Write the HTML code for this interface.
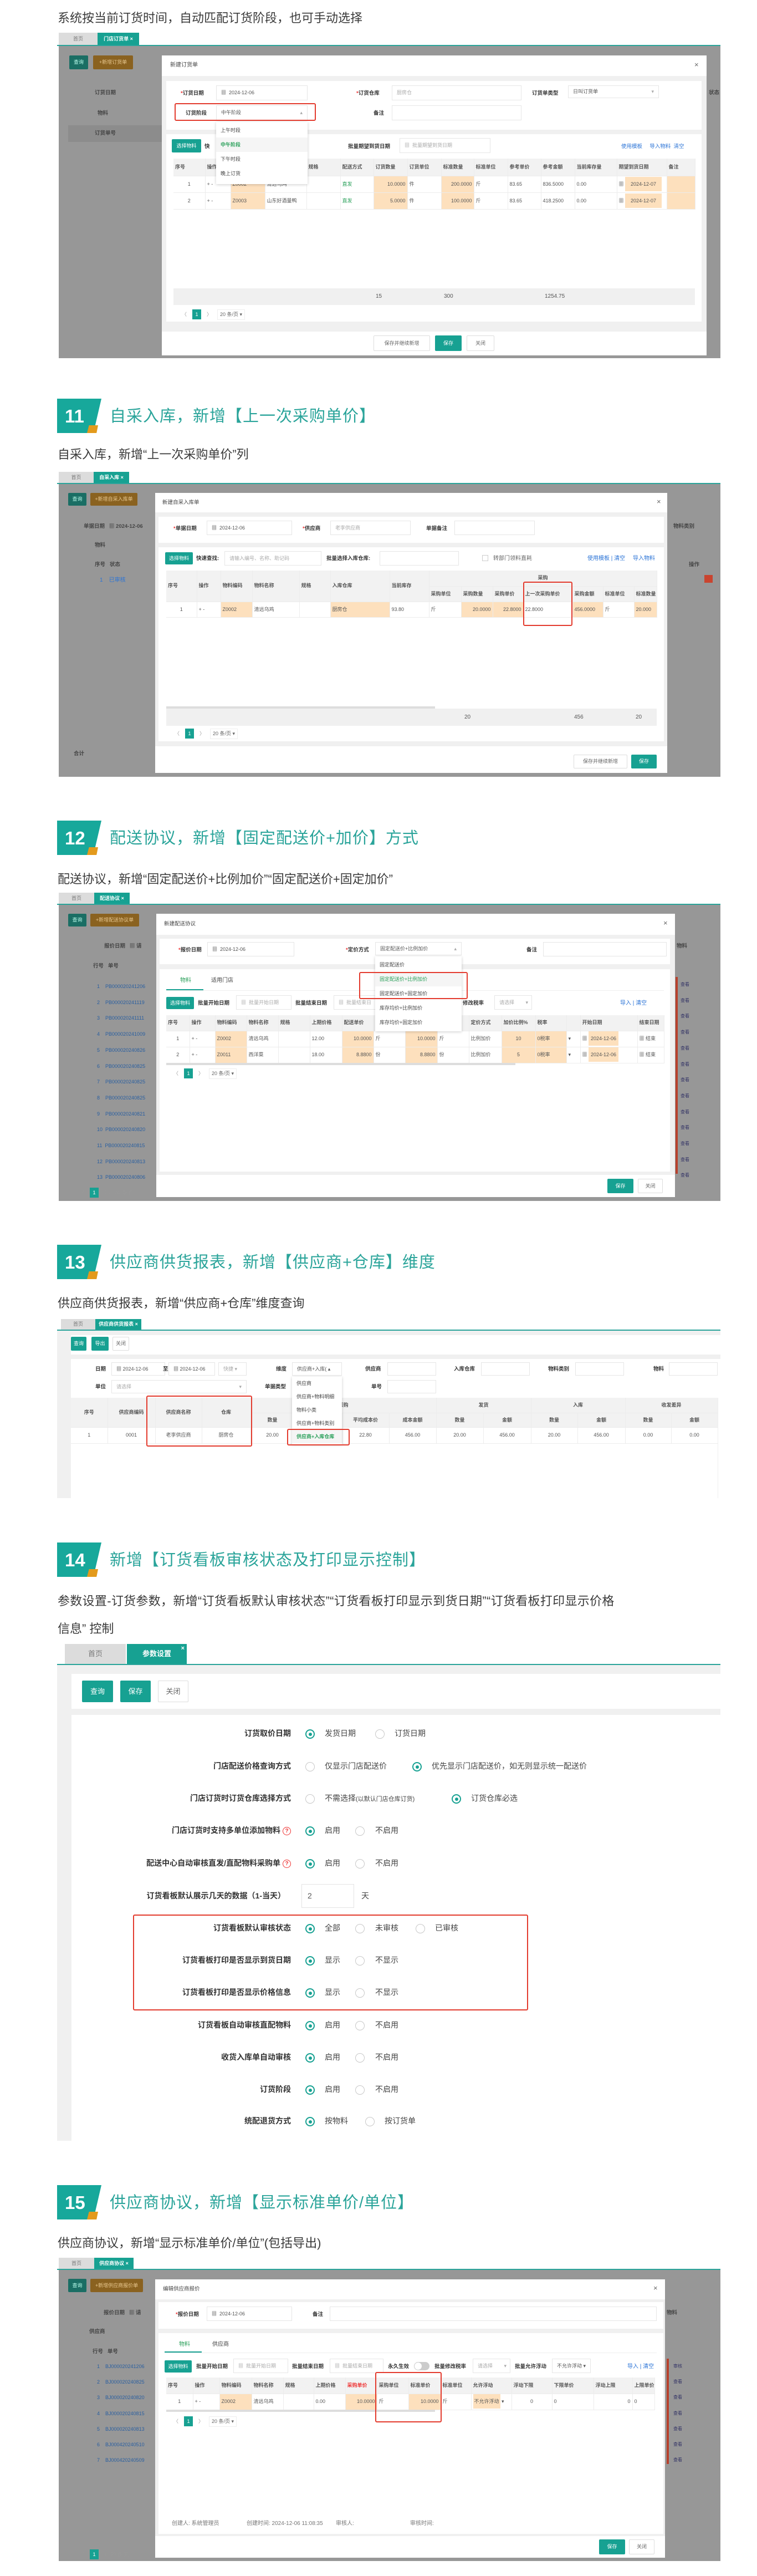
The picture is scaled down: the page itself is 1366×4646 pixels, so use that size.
<!DOCTYPE html>
<html><head><meta charset="utf-8">
<style>
*{margin:0;padding:0;box-sizing:border-box}
body{width:1366px;height:4646px;position:relative;background:#fff;font-family:"Liberation Sans","Noto Sans CJK SC",sans-serif;color:#333;overflow:hidden}
.a{position:absolute}
.txt{position:absolute;left:104px;font-size:22px;color:#3a3a3a;white-space:nowrap;line-height:30px}
.hd{position:absolute;left:103px;height:62px;width:900px}
.hd .bd{position:absolute;left:0;top:0;width:80px;height:62px;background:#17a89b;clip-path:polygon(0 0,100% 0,82% 100%,0 100%)}
.hd .or{position:absolute;left:54px;top:48px;width:20px;height:14px;background:#e39a1c;clip-path:polygon(18% 0,100% 0,86% 100%,0 100%)}
.hd .n{position:absolute;left:14px;top:12px;font-size:33px;font-weight:bold;color:#fff;line-height:40px}
.hd .tt{position:absolute;left:95px;top:12px;font-size:29px;color:#2aa49a;line-height:40px;white-space:nowrap;letter-spacing:1px}
.s{position:absolute;left:103px;width:1197px;overflow:hidden;font-size:10px;color:#555;line-height:1.2}
.s .a{white-space:nowrap}
.tabs{position:absolute;left:0;top:0;width:100%;border-bottom:2px solid #2aa49a;background:#fff}
.tab{position:absolute;top:0;bottom:0;display:flex;align-items:center;justify-content:center;font-size:9px}
.t0{background:#dcdcdc;color:#777}
.t1{background:#17a192;color:#fff;font-weight:bold}
.gray{background:#979797}
.w{background:#fff}
.lg{background:#f0f0f0}
.btn{position:absolute;display:flex;align-items:center;justify-content:center;font-size:9px;border-radius:2px}
.bt{background:#17a192;color:#fff}
.bo{background:#c98316;color:#f3dcb0}
.bw{background:#fff;border:1px solid #ddd;color:#666}
.inp{position:absolute;background:#fff;border:1px solid #e6e6e6;font-size:9px;color:#555;padding-left:8px;display:flex;align-items:center}
.ph{color:#aaa}
.lb{position:absolute;font-size:9.5px;color:#333;font-weight:bold}
.red{position:absolute;border:2px solid #e33b2e;border-radius:3px}
table.t{position:absolute;border-collapse:collapse;table-layout:fixed;font-size:9px;color:#555}
table.t td{border-right:1px solid #ececec;border-bottom:1px solid #ececec;padding:0 3px;white-space:nowrap;overflow:hidden}
table.t tr.h td{background:#f2f2f2;color:#555;font-weight:bold}
.o{background:#fde0bd !important}
.g{color:#2aa05a}
.bl{color:#2a73d6}
.dd{position:absolute;background:#fff;box-shadow:0 1px 5px rgba(0,0,0,.2);font-size:9px;color:#444}
.dd div{height:26px;display:flex;align-items:center;padding-left:8px}
.pg{position:absolute;display:flex;align-items:center;gap:10px;font-size:9px;color:#999}
.pg b{display:inline-block;width:16px;height:18px;background:#17a192;color:#fff;text-align:center;line-height:18px;font-weight:normal}
.pr{position:absolute;left:0;width:1197px;height:20px;font-size:14px}
.pr .l{position:absolute;right:775px;top:0;font-weight:bold;color:#333;white-space:nowrap}
.pr .op{position:absolute;top:0;white-space:nowrap;color:#444}
.rd{position:absolute;top:1px;width:17px;height:17px;border-radius:50%;border:1px solid #c8c8c8;background:#fff}
.rd.on{border:2px solid #17a192}
.rd.on:after{content:"";position:absolute;left:3.5px;top:3.5px;width:6px;height:6px;border-radius:50%;background:#17a192}
.q{display:inline-block;width:15px;height:15px;border:1px solid #e33;border-radius:50%;color:#e33;font-size:10px;line-height:13px;text-align:center;margin-left:4px;vertical-align:1px}
</style></head><body>

<div class="txt" style="top:18px">系统按当前订货时间，自动匹配订货阶段，也可手动选择</div>

<!-- Screenshot 1 -->
<div class="s" style="top:59px;height:587px">
  <div class="tabs" style="height:24px"><div class="tab t0" style="left:3px;width:70px">首页</div><div class="tab t1" style="left:73px;width:75px">门店订货单 ×</div></div>
  <div class="a gray" style="left:3px;top:24px;width:1194px;height:563px"></div>
  <div class="btn" style="left:22px;top:41px;width:34px;height:25px;background:#1a6e64;color:#bfe">查询</div>
  <div class="btn" style="left:65px;top:41px;width:72px;height:25px;background:#8a6220;color:#e8c890">+新增订货单</div>
  <div class="lb" style="left:68px;top:103px;color:#444">订货日期</div>
  <div class="lb" style="left:73px;top:140px;color:#444">物料</div>
  <div class="a" style="left:20px;top:167px;width:170px;height:30px;background:#8c8c8c"></div>
  <div class="lb" style="left:68px;top:176px;color:#444">订货单号</div>
  <div class="lb" style="left:1176px;top:103px;color:#444">状态</div>
  <!-- modal -->
  <div class="a lg" style="left:189px;top:41px;width:983px;height:541px"></div>
  <div class="a w" style="left:189px;top:41px;width:983px;height:37px"></div>
  <div class="a" style="left:204px;top:53px;font-size:10px;color:#444">新建订货单</div>
  <div class="a" style="left:1150px;top:50px;font-size:13px;color:#666">×</div>
  <div class="a w" style="left:197px;top:87px;width:966px;height:88px"></div>
  <div class="lb" style="left:223px;top:104px"><span style="color:#e33">*</span>订货日期</div>
  <div class="inp" style="left:287px;top:95px;width:165px;height:27px">▦ &nbsp;2024-12-06</div>
  <div class="lb" style="left:540px;top:104px"><span style="color:#e33">*</span>订货仓库</div>
  <div class="inp ph" style="left:604px;top:95px;width:234px;height:27px">厨房仓</div>
  <div class="lb" style="left:857px;top:104px">订货单类型</div>
  <div class="inp" style="left:922px;top:95px;width:164px;height:23px">日叫订货单<span style="margin-left:auto;margin-right:8px;color:#aaa">▾</span></div>
  <div class="lb" style="left:232px;top:140px">订货阶段</div>
  <div class="inp" style="left:287px;top:131px;width:165px;height:27px">中午阶段<span style="margin-left:auto;margin-right:8px;color:#aaa">▴</span></div>
  <div class="red" style="left:212px;top:127px;width:255px;height:32px"></div>
  <div class="lb" style="left:571px;top:140px">备注</div>
  <div class="inp" style="left:604px;top:131px;width:234px;height:27px"></div>
  <div class="a w" style="left:197px;top:183px;width:966px;height:338px"></div>
  <div class="btn bt" style="left:207px;top:192px;width:53px;height:24px">选择物料</div>
  <div class="lb" style="left:266px;top:200px">快</div>
  <div class="lb" style="left:525px;top:200px">批量期望到货日期</div>
  <div class="inp ph" style="left:618px;top:190px;width:164px;height:27px">▦ &nbsp;批量期望到货日期</div>
  <div class="a bl" style="left:1018px;top:200px;font-size:9.5px">使用模板 &nbsp; &nbsp; 导入物料 &nbsp;清空</div>
  <table class="t" style="left:210px;top:227px;width:941px">
   <colgroup><col style="width:57px"><col style="width:46px"><col style="width:62px"><col style="width:75px"><col style="width:61px"><col style="width:60px"><col style="width:61px"><col style="width:61px"><col style="width:59px"><col style="width:61px"><col style="width:60px"><col style="width:61px"><col style="width:76px"><col style="width:90px"><col style="width:51px"></colgroup>
   <tr class="h" style="height:31px"><td>序号</td><td>操作</td><td>物料编码</td><td>物料名称</td><td>规格</td><td>配送方式</td><td>订货数量</td><td>订货单位</td><td>标准数量</td><td>标准单位</td><td>参考单价</td><td>参考金额</td><td>当前库存量</td><td>期望到货日期</td><td>备注</td></tr>
   <tr style="height:30px"><td style="text-align:center">1</td><td>+ -</td><td class="o">Z0002</td><td>清远乌鸡</td><td></td><td class="g">直发</td><td class="o" style="text-align:right">10.0000</td><td>件</td><td class="o" style="text-align:right">200.0000</td><td>斤</td><td>83.65</td><td>836.5000</td><td>0.00</td><td>▦ <span class="o" style="padding:8px 10px">2024-12-07</span></td><td class="o"></td></tr>
   <tr style="height:30px"><td style="text-align:center">2</td><td>+ -</td><td class="o">Z0003</td><td>山东好酒量鸭</td><td></td><td class="g">直发</td><td class="o" style="text-align:right">5.0000</td><td>件</td><td class="o" style="text-align:right">100.0000</td><td>斤</td><td>83.65</td><td>418.2500</td><td>0.00</td><td>▦ <span class="o" style="padding:8px 10px">2024-12-07</span></td><td class="o"></td></tr>
  </table>
  <div class="a lg" style="left:210px;top:461px;width:941px;height:30px"></div>
  <div class="a" style="left:575px;top:470px">15</div>
  <div class="a" style="left:698px;top:470px">300</div>
  <div class="a" style="left:880px;top:470px">1254.75</div>
  <div class="pg" style="left:225px;top:499px">〈 <b>1</b> 〉 <span style="border:1px solid #eee;padding:3px 4px;color:#666">20 条/页 ▾</span></div>
  <div class="dd" style="left:287px;top:161px;width:165px;height:112px;padding-top:2px">
    <div>上午时段</div><div class="g" style="background:#f5f5f5;font-weight:bold">中午阶段</div><div>下午时段</div><div>晚上订货</div>
  </div>
  <div class="a w" style="left:189px;top:539px;width:983px;height:43px"></div>
  <div class="btn bw" style="left:571px;top:546px;width:102px;height:28px">保存并继续新增</div>
  <div class="btn bt" style="left:682px;top:546px;width:48px;height:28px">保存</div>
  <div class="btn bw" style="left:739px;top:546px;width:50px;height:28px">关闭</div>
</div>

<!-- Heading 11 -->
<div class="hd" style="top:719px"><div class="bd"></div><div class="or"></div><div class="n">11</div><div class="tt">自采入库，新增【上一次采购单价】</div></div>
<div class="txt" style="top:805px">自采入库，新增“上一次采购单价”列</div>

<!-- Screenshot 2 -->
<div class="s" style="top:851px;height:550px">
  <div class="tabs" style="height:22px"><div class="tab t0" style="left:3px;width:63px">首页</div><div class="tab t1" style="left:66px;width:64px">自采入库 ×</div></div>
  <div class="a gray" style="left:3px;top:22px;width:1194px;height:528px"></div>
  <div class="btn" style="left:20px;top:38px;width:33px;height:23px;background:#1a6e64;color:#bfe">查询</div>
  <div class="btn" style="left:60px;top:38px;width:85px;height:23px;background:#8a6220;color:#e8c890">+新增自采入库单</div>
  <div class="lb" style="left:48px;top:93px;color:#444">单据日期 &nbsp; ▦ 2024-12-06</div>
  <div class="lb" style="left:68px;top:127px;color:#444">物料</div>
  <div class="lb" style="left:68px;top:162px;color:#444">序号 &nbsp; 状态</div>
  <div class="a bl" style="left:77px;top:190px">1 &nbsp; &nbsp;已审核</div>
  <div class="lb" style="left:30px;top:503px;color:#444">合计</div>
  <div class="lb" style="left:1112px;top:93px;color:#444">物料类别</div>
  <div class="lb" style="left:1140px;top:162px;color:#444">操作</div>
  <div class="a" style="left:1168px;top:186px;width:15px;height:14px;background:#c9442f"></div>
  <div class="a lg" style="left:177px;top:38px;width:924px;height:505px"></div>
  <div class="a w" style="left:177px;top:38px;width:924px;height:35px"></div>
  <div class="a" style="left:190px;top:50px;font-size:9.5px;color:#444">新建自采入库单</div>
  <div class="a" style="left:1082px;top:46px;font-size:13px;color:#666">×</div>
  <div class="a w" style="left:183px;top:81px;width:912px;height:47px"></div>
  <div class="lb" style="left:210px;top:97px"><span style="color:#e33">*</span>单据日期</div>
  <div class="inp" style="left:270px;top:88px;width:154px;height:26px">▦ &nbsp;2024-12-06</div>
  <div class="lb" style="left:443px;top:97px"><span style="color:#e33">*</span>供应商</div>
  <div class="inp ph" style="left:493px;top:88px;width:145px;height:26px">老李供应商</div>
  <div class="lb" style="left:666px;top:97px">单据备注</div>
  <div class="inp" style="left:717px;top:88px;width:145px;height:26px"></div>
  <div class="a w" style="left:183px;top:136px;width:912px;height:350px"></div>
  <div class="btn bt" style="left:195px;top:145px;width:50px;height:22px">选择物料</div>
  <div class="lb" style="left:251px;top:151px">快速查找:</div>
  <div class="inp ph" style="left:302px;top:143px;width:175px;height:26px">请输入编号、名称、助记码</div>
  <div class="lb" style="left:486px;top:151px">批量选择入库仓库:</div>
  <div class="inp" style="left:582px;top:143px;width:143px;height:26px"></div>
  <div class="a" style="left:767px;top:150px;width:11px;height:11px;border:1px solid #ccc"></div>
  <div class="a" style="left:787px;top:151px;color:#666">转部门领料直耗</div>
  <div class="a bl" style="left:957px;top:151px">使用模板 | 清空 &nbsp; &nbsp; 导入物料</div>
  <table class="t" style="left:197px;top:178px;width:885px">
   <colgroup><col style="width:55px"><col style="width:43px"><col style="width:57px"><col style="width:85px"><col style="width:56px"><col style="width:107px"><col style="width:71px"><col style="width:58px"><col style="width:57px"><col style="width:55px"><col style="width:89px"><col style="width:55px"><col style="width:56px"><col style="width:41px"></colgroup>
   <tr class="h" style="height:28px"><td rowspan="2">序号</td><td rowspan="2">操作</td><td rowspan="2">物料编码</td><td rowspan="2">物料名称</td><td rowspan="2">规格</td><td rowspan="2">入库仓库</td><td rowspan="2">当前库存</td><td colspan="7" style="text-align:center">采购</td></tr>
   <tr class="h" style="height:28px"><td>采购单位</td><td>采购数量</td><td>采购单价</td><td>上一次采购单价</td><td>采购金额</td><td>标准单位</td><td>标准数量</td></tr>
   <tr style="height:28px"><td style="text-align:center">1</td><td>+ -</td><td class="o">Z0002</td><td>清远乌鸡</td><td></td><td class="o">厨房仓</td><td>93.80</td><td>斤</td><td class="o" style="text-align:right">20.0000</td><td class="o" style="text-align:right">22.8000</td><td>22.8000</td><td class="o">456.0000</td><td>斤</td><td class="o">20.000</td></tr>
  </table>
  <div class="red" style="left:841px;top:198px;width:89px;height:80px"></div>
  <div class="a" style="left:197px;top:423px;width:485px;height:4px;background:#ddd"></div>
  <div class="a lg" style="left:197px;top:427px;width:885px;height:31px"></div>
  <div class="a" style="left:735px;top:437px">20</div>
  <div class="a" style="left:933px;top:437px">456</div>
  <div class="a" style="left:1044px;top:437px">20</div>
  <div class="pg" style="left:212px;top:463px">〈 <b>1</b> 〉 <span style="border:1px solid #eee;padding:3px 4px;color:#666">20 条/页 ▾</span></div>
  <div class="a w" style="left:177px;top:495px;width:924px;height:48px"></div>
  <div class="btn bw" style="left:932px;top:510px;width:97px;height:25px">保存并继续新增</div>
  <div class="btn bt" style="left:1036px;top:510px;width:46px;height:25px">保存</div>
</div>

<!-- Heading 12 -->
<div class="hd" style="top:1480px"><div class="bd"></div><div class="or"></div><div class="n">12</div><div class="tt">配送协议，新增【固定配送价+加价】方式</div></div>
<div class="txt" style="top:1571px">配送协议，新增“固定配送价+比例加价”“固定配送价+固定加价”</div>

<!-- Screenshot 3 -->
<div class="s" style="top:1610px;height:556px">
  <div class="tabs" style="height:22px"><div class="tab t0" style="left:3px;width:64px">首页</div><div class="tab t1" style="left:67px;width:64px">配送协议 ×</div></div>
  <div class="a gray" style="left:3px;top:22px;width:1194px;height:534px"></div>
  <div class="btn" style="left:20px;top:38px;width:33px;height:23px;background:#1a6e64;color:#bfe">查询</div>
  <div class="btn" style="left:60px;top:38px;width:88px;height:23px;background:#8a6220;color:#e8c890">+新增配送协议单</div>
  <div class="lb" style="left:85px;top:91px;color:#444">报价日期 &nbsp; ▦ 请</div>
  <div class="lb" style="left:65px;top:127px;color:#444">行号 &nbsp; 单号</div>
  <div class="a" style="left:72px;top:155px;color:#2a5fa0;line-height:28.7px;font-size:9px">
   <div>1 &nbsp; &nbsp;PB000020241206</div><div>2 &nbsp; &nbsp;PB000020241119</div><div>3 &nbsp; &nbsp;PB000020241111</div><div>4 &nbsp; &nbsp;PB000020241009</div><div>5 &nbsp; &nbsp;PB000020240826</div><div>6 &nbsp; &nbsp;PB000020240825</div><div>7 &nbsp; &nbsp;PB000020240825</div><div>8 &nbsp; &nbsp;PB000020240825</div><div>9 &nbsp; &nbsp;PB000020240821</div><div>10 &nbsp;PB000020240820</div><div>11 &nbsp;PB000020240815</div><div>12 &nbsp;PB000020240813</div><div>13 &nbsp;PB000020240806</div>
  </div>
  <div class="pg" style="left:40px;top:532px">〈 <b>1</b> 2 〉 20 条/页</div>
  <div class="lb" style="left:1118px;top:91px;color:#444">物料</div>
  <div class="a" style="left:1116px;top:152px;width:4px;height:355px;background:#b8412c"></div>
  <div class="a" style="left:1125px;top:152px;color:#336;line-height:28.7px;font-size:8px">
   <div>查看</div><div>查看</div><div>查看</div><div>查看</div><div>查看</div><div>查看</div><div>查看</div><div>查看</div><div>查看</div><div>查看</div><div>查看</div><div>查看</div><div>查看</div>
  </div>
  <div class="a lg" style="left:179px;top:38px;width:936px;height:511px"></div>
  <div class="a w" style="left:179px;top:38px;width:936px;height:38px"></div>
  <div class="a" style="left:193px;top:51px;font-size:9.5px;color:#444">新建配送协议</div>
  <div class="a" style="left:1094px;top:47px;font-size:13px;color:#666">×</div>
  <div class="a w" style="left:185px;top:83px;width:921px;height:46px"></div>
  <div class="lb" style="left:219px;top:98px"><span style="color:#e33">*</span>报价日期</div>
  <div class="inp" style="left:271px;top:89px;width:157px;height:26px">▦ &nbsp;2024-12-06</div>
  <div class="lb" style="left:521px;top:98px"><span style="color:#e33">*</span>定价方式</div>
  <div class="inp" style="left:574px;top:89px;width:156px;height:24px">固定配送价+比例加价<span style="margin-left:auto;margin-right:8px;color:#aaa">▴</span></div>
  <div class="lb" style="left:847px;top:98px">备注</div>
  <div class="inp" style="left:877px;top:89px;width:223px;height:26px"></div>
  <div class="a w" style="left:185px;top:138px;width:921px;height:365px"></div>
  <div class="a g" style="left:222px;top:153px">物料</div>
  <div class="a" style="left:197px;top:174px;width:67px;height:2px;background:#17a192"></div>
  <div class="a" style="left:278px;top:153px;color:#444">适用门店</div>
  <div class="a" style="left:197px;top:176px;width:898px;height:1px;background:#eee"></div>
  <div class="btn bt" style="left:197px;top:188px;width:50px;height:22px">选择物料</div>
  <div class="lb" style="left:254px;top:194px">批量开始日期</div>
  <div class="inp ph" style="left:323px;top:185px;width:100px;height:26px">▦ &nbsp;批量开始日期</div>
  <div class="lb" style="left:430px;top:194px">批量结束日期</div>
  <div class="inp ph" style="left:499px;top:185px;width:90px;height:26px">▦ &nbsp;批量结束日</div>
  <div class="lb" style="left:732px;top:194px">修改税率</div>
  <div class="inp ph" style="left:789px;top:185px;width:68px;height:26px">请选择 <span style="margin-left:auto;margin-right:6px">▾</span></div>
  <div class="a bl" style="left:1016px;top:194px">导入 | 清空</div>
  <table class="t" style="left:197px;top:221px;width:898px">
   <colgroup><col style="width:42px"><col style="width:46px"><col style="width:57px"><col style="width:57px"><col style="width:57px"><col style="width:58px"><col style="width:57px"><col style="width:57px"><col style="width:58px"><col style="width:57px"><col style="width:59px"><col style="width:61px"><col style="width:56px"><col style="width:25px"><col style="width:103px"><col style="width:48px"></colgroup>
   <tr class="h" style="height:28px"><td>序号</td><td>操作</td><td>物料编码</td><td>物料名称</td><td>规格</td><td>上期价格</td><td>配送单价</td><td>配送单位</td><td>标准单价</td><td>标准单位</td><td>定价方式</td><td>加价比例%</td><td>税率</td><td></td><td>开始日期</td><td>结束日期</td></tr>
   <tr style="height:29px"><td style="text-align:center">1</td><td>+ -</td><td class="o">Z0002</td><td>清远乌鸡</td><td></td><td>12.00</td><td class="o" style="text-align:right">10.0000</td><td>斤</td><td class="o" style="text-align:right">10.0000</td><td>斤</td><td>比例加价</td><td class="o" style="text-align:center">10</td><td class="o">0税率</td><td>▾</td><td>▦ <span class="o" style="padding:8px 4px">2024-12-06</span></td><td>▦ 结束</td></tr>
   <tr style="height:29px"><td style="text-align:center">2</td><td>+ -</td><td class="o">Z0011</td><td>西洋菜</td><td></td><td>18.00</td><td class="o" style="text-align:right">8.8800</td><td>份</td><td class="o" style="text-align:right">8.8800</td><td>份</td><td>比例加价</td><td class="o" style="text-align:center">5</td><td class="o">0税率</td><td>▾</td><td>▦ <span class="o" style="padding:8px 4px">2024-12-06</span></td><td>▦ 结束</td></tr>
  </table>
  <div class="a" style="left:197px;top:307px;width:630px;height:4px;background:#ddd"></div>
  <div class="pg" style="left:210px;top:317px">〈 <b>1</b> 〉 <span style="border:1px solid #eee;padding:3px 4px;color:#666">20 条/页 ▾</span></div>
  <div class="dd" style="left:574px;top:115px;width:156px;height:135px;padding-top:2px">
    <div>固定配送价</div><div class="g" style="background:#f5f5f5">固定配送价+比例加价</div><div>固定配送价+固定加价</div><div>库存均价+比例加价</div><div>库存均价+固定加价</div>
  </div>
  <div class="red" style="left:545px;top:143px;width:196px;height:49px"></div>
  <div class="a w" style="left:179px;top:509px;width:936px;height:40px"></div>
  <div class="btn bt" style="left:993px;top:516px;width:47px;height:26px">保存</div>
  <div class="btn bw" style="left:1048px;top:516px;width:45px;height:26px">关闭</div>
</div>

<!-- Heading 13 -->
<div class="hd" style="top:2245px"><div class="bd"></div><div class="or"></div><div class="n">13</div><div class="tt">供应商供货报表，新增【供应商+仓库】维度</div></div>
<div class="txt" style="top:2336px">供应商供货报表，新增“供应商+仓库”维度查询</div>

<!-- Screenshot 4 -->
<div class="s" style="top:2379px;height:323px;background:#fff">
  <div class="tabs" style="height:21px"><div class="tab t0" style="left:7px;width:62px">首页</div><div class="tab t1" style="left:69px;width:83px">供应商供货报表 ×</div></div>
  <div class="a lg" style="left:0;top:21px;width:25px;height:302px"></div>
  <div class="a lg" style="left:25px;top:21px;width:1172px;height:8px"></div>
  <div class="btn bt" style="left:25px;top:32px;width:28px;height:25px">查询</div>
  <div class="btn bt" style="left:62px;top:32px;width:31px;height:25px">导出</div>
  <div class="btn bw" style="left:100px;top:32px;width:30px;height:25px">关闭</div>
  <div class="a lg" style="left:25px;top:64px;width:1172px;height:8px"></div>
  <div class="lb" style="left:69px;top:85px">日期</div>
  <div class="inp" style="left:98px;top:78px;width:97px;height:24px">▦ 2024-12-06</div>
  <div class="lb" style="left:191px;top:85px">至</div>
  <div class="inp" style="left:201px;top:78px;width:84px;height:24px">▦ 2024-12-06</div>
  <div class="inp ph" style="left:291px;top:78px;width:51px;height:24px">快捷 ▾</div>
  <div class="lb" style="left:395px;top:85px">维度</div>
  <div class="inp" style="left:424px;top:78px;width:90px;height:24px">供应商+入库( ▴</div>
  <div class="lb" style="left:556px;top:85px">供应商</div>
  <div class="inp" style="left:596px;top:78px;width:88px;height:24px"></div>
  <div class="lb" style="left:716px;top:85px">入库仓库</div>
  <div class="inp" style="left:765px;top:78px;width:88px;height:24px"></div>
  <div class="lb" style="left:886px;top:85px">物料类别</div>
  <div class="inp" style="left:935px;top:78px;width:88px;height:24px"></div>
  <div class="lb" style="left:1076px;top:85px">物料</div>
  <div class="inp" style="left:1104px;top:78px;width:88px;height:24px"></div>
  <div class="lb" style="left:69px;top:117px">单位</div>
  <div class="inp ph" style="left:98px;top:110px;width:244px;height:24px">请选择<span style="margin-left:auto;margin-right:8px">▾</span></div>
  <div class="lb" style="left:375px;top:117px">单据类型</div>
  <div class="lb" style="left:567px;top:117px">单号</div>
  <div class="inp" style="left:596px;top:110px;width:88px;height:24px"></div>
  <table class="t" style="left:25px;top:142px;width:1167px">
   <colgroup><col style="width:66px"><col style="width:86px"><col style="width:84px"><col style="width:88px"><col style="width:79px"><col style="width:86px"><col style="width:85px"><col style="width:85px"><col style="width:85px"><col style="width:86px"><col style="width:84px"><col style="width:86px"><col style="width:83px"><col style="width:84px"></colgroup>
   <tr class="h" style="height:27px"><td rowspan="2" style="text-align:center">序号</td><td rowspan="2" style="text-align:center">供应商编码</td><td rowspan="2" style="text-align:center">供应商名称</td><td rowspan="2" style="text-align:center">仓库</td><td colspan="4" style="text-align:center">采购</td><td colspan="2" style="text-align:center">发货</td><td colspan="2" style="text-align:center">入库</td><td colspan="2" style="text-align:center">收发差异</td></tr>
   <tr class="h" style="height:26px;text-align:center"><td style="text-align:center">数量</td><td></td><td style="text-align:center">平均成本价</td><td style="text-align:center">成本金额</td><td style="text-align:center">数量</td><td style="text-align:center">金额</td><td style="text-align:center">数量</td><td style="text-align:center">金额</td><td style="text-align:center">数量</td><td style="text-align:center">金额</td></tr>
   <tr style="height:29px;text-align:center"><td>1</td><td>0001</td><td>老李供应商</td><td>厨房仓</td><td>20.00</td><td></td><td>22.80</td><td>456.00</td><td>20.00</td><td>456.00</td><td>20.00</td><td>456.00</td><td>0.00</td><td>0.00</td></tr>
  </table>
  <div class="a" style="left:1192px;top:142px;width:1px;height:181px;background:#eee"></div>
  <div class="red" style="left:161px;top:138px;width:191px;height:92px"></div>
  <div class="dd" style="left:424px;top:104px;width:90px;height:122px">
    <div style="height:24px">供应商</div><div style="height:24px">供应商+物料明细</div><div style="height:24px">物料小类</div><div style="height:24px">供应商+物料类别</div><div class="g" style="height:24px;background:#f5f5f5;font-weight:bold">供应商+入库仓库</div>
  </div>
  <div class="red" style="left:415px;top:198px;width:113px;height:30px"></div>
</div>

<!-- Heading 14 -->
<div class="hd" style="top:2782px"><div class="bd"></div><div class="or"></div><div class="n">14</div><div class="tt">新增【订货看板审核状态及打印显示控制】</div></div>
<div class="txt" style="top:2873px;letter-spacing:0.3px">参数设置-订货参数，新增“订货看板默认审核状态”“订货看板打印显示到货日期”“订货看板打印显示价格</div>
<div class="txt" style="top:2923px">信息” 控制</div>

<!-- Screenshot 5 -->
<div class="s" style="top:2965px;height:896px;background:#fff;font-size:14px">
  <div class="tabs" style="height:38px"><div class="tab t0" style="left:14px;width:110px;font-size:13px">首页</div><div class="tab t1" style="left:126px;width:108px;font-size:13px">参数设置 <span style="position:absolute;right:4px;top:2px;font-size:11px">×</span></div></div>
  <div class="a lg" style="left:0;top:38px;width:1197px;height:858px"></div>
  <div class="a w" style="left:26px;top:54px;width:1171px;height:63px"></div>
  <div class="btn bt" style="left:45px;top:66px;width:56px;height:39px;font-size:13px">查询</div>
  <div class="btn bt" style="left:114px;top:66px;width:55px;height:39px;font-size:13px">保存</div>
  <div class="btn bw" style="left:182px;top:66px;width:55px;height:39px;font-size:13px">关闭</div>
  <div class="a w" style="left:26px;top:128px;width:1171px;height:768px"></div>

  <div class="pr" style="top:153px"><div class="l">订货取价日期</div><span class="rd on" style="left:448px"></span><span class="op" style="left:483px">发货日期</span><span class="rd" style="left:574px"></span><span class="op" style="left:609px">订货日期</span></div>
  <div class="pr" style="top:212px"><div class="l">门店配送价格查询方式</div><span class="rd" style="left:448px"></span><span class="op" style="left:483px">仅显示门店配送价</span><span class="rd on" style="left:641px"></span><span class="op" style="left:676px">优先显示门店配送价，如无则显示统一配送价</span></div>
  <div class="pr" style="top:270px"><div class="l">门店订货时订货仓库选择方式</div><span class="rd" style="left:448px"></span><span class="op" style="left:483px">不需选择<span style="font-size:11px">(以默认门店仓库订货)</span></span><span class="rd on" style="left:712px"></span><span class="op" style="left:747px">订货仓库必选</span></div>
  <div class="pr" style="top:328px"><div class="l">门店订货时支持多单位添加物料<span class="q">?</span></div><span class="rd on" style="left:448px"></span><span class="op" style="left:483px">启用</span><span class="rd" style="left:538px"></span><span class="op" style="left:574px">不启用</span></div>
  <div class="pr" style="top:387px"><div class="l">配送中心自动审核直发/直配物料采购单<span class="q">?</span></div><span class="rd on" style="left:448px"></span><span class="op" style="left:483px">启用</span><span class="rd" style="left:538px"></span><span class="op" style="left:574px">不启用</span></div>
  <div class="pr" style="top:446px"><div class="l" style="right:785px">订货看板默认展示几天的数据（1-当天）</div><div class="a" style="left:441px;top:-13px;width:95px;height:43px;border:1px solid #e3e3e3;padding:12px 0 0 10px;font-size:14px">2</div><span class="op" style="left:549px">天</span></div>
  <div class="pr" style="top:504px"><div class="l">订货看板默认审核状态</div><span class="rd on" style="left:448px"></span><span class="op" style="left:483px">全部</span><span class="rd" style="left:538px"></span><span class="op" style="left:574px">未审核</span><span class="rd" style="left:647px"></span><span class="op" style="left:682px">已审核</span></div>
  <div class="pr" style="top:562px"><div class="l">订货看板打印是否显示到货日期</div><span class="rd on" style="left:448px"></span><span class="op" style="left:483px">显示</span><span class="rd" style="left:538px"></span><span class="op" style="left:574px">不显示</span></div>
  <div class="pr" style="top:620px"><div class="l">订货看板打印是否显示价格信息</div><span class="rd on" style="left:448px"></span><span class="op" style="left:483px">显示</span><span class="rd" style="left:538px"></span><span class="op" style="left:574px">不显示</span></div>
  <div class="red" style="left:137px;top:488px;width:713px;height:173px"></div>
  <div class="pr" style="top:679px"><div class="l">订货看板自动审核直配物料</div><span class="rd on" style="left:448px"></span><span class="op" style="left:483px">启用</span><span class="rd" style="left:538px"></span><span class="op" style="left:574px">不启用</span></div>
  <div class="pr" style="top:737px"><div class="l">收货入库单自动审核</div><span class="rd on" style="left:448px"></span><span class="op" style="left:483px">启用</span><span class="rd" style="left:538px"></span><span class="op" style="left:574px">不启用</span></div>
  <div class="pr" style="top:795px"><div class="l">订货阶段</div><span class="rd on" style="left:448px"></span><span class="op" style="left:483px">启用</span><span class="rd" style="left:538px"></span><span class="op" style="left:574px">不启用</span></div>
  <div class="pr" style="top:852px"><div class="l">统配退货方式</div><span class="rd on" style="left:448px"></span><span class="op" style="left:483px">按物料</span><span class="rd" style="left:556px"></span><span class="op" style="left:591px">按订货单</span></div>
</div>

<!-- Heading 15 -->
<div class="hd" style="top:3941px"><div class="bd"></div><div class="or"></div><div class="n">15</div><div class="tt">供应商协议，新增【显示标准单价/单位】</div></div>
<div class="txt" style="top:4031px">供应商协议，新增“显示标准单价/单位”(包括导出)</div>

<!-- Screenshot 6 -->
<div class="s" style="top:4072px;height:547px">
  <div class="tabs" style="height:22px"><div class="tab t0" style="left:3px;width:64px">首页</div><div class="tab t1" style="left:67px;width:71px">供应商协议 ×</div></div>
  <div class="a gray" style="left:3px;top:22px;width:1194px;height:525px"></div>
  <div class="btn" style="left:20px;top:38px;width:33px;height:24px;background:#1a6e64;color:#bfe">查询</div>
  <div class="btn" style="left:60px;top:38px;width:95px;height:24px;background:#8a6220;color:#e8c890">+新增供应商报价单</div>
  <div class="lb" style="left:84px;top:94px;color:#444">报价日期 &nbsp; ▦ 请</div>
  <div class="lb" style="left:58px;top:128px;color:#444">供应商</div>
  <div class="lb" style="left:64px;top:164px;color:#444">行号 &nbsp; 单号</div>
  <div class="a" style="left:72px;top:182px;color:#2a5fa0;line-height:28.2px;font-size:9px">
   <div>1 &nbsp; &nbsp;BJ000020241206</div><div>2 &nbsp; &nbsp;BJ000020240825</div><div>3 &nbsp; &nbsp;BJ000020240820</div><div>4 &nbsp; &nbsp;BJ000020240815</div><div>5 &nbsp; &nbsp;BJ000020240813</div><div>6 &nbsp; &nbsp;BJ000420240510</div><div>7 &nbsp; &nbsp;BJ000420240509</div>
  </div>
  <div class="pg" style="left:40px;top:526px">〈 <b>1</b> 〉 20 条/页</div>
  <div class="lb" style="left:1100px;top:94px;color:#444">物料</div>
  <div class="a" style="left:1100px;top:182px;width:4px;height:190px;background:#b8412c"></div>
  <div class="a" style="left:1112px;top:182px;color:#336;line-height:28.2px;font-size:8px"><div>审核</div><div>查看</div><div>查看</div><div>查看</div><div>查看</div><div>查看</div><div>查看</div></div>
  <div class="a lg" style="left:177px;top:39px;width:920px;height:502px"></div>
  <div class="a w" style="left:177px;top:39px;width:920px;height:36px"></div>
  <div class="a" style="left:191px;top:51px;font-size:9.5px;color:#444">编辑供应商报价</div>
  <div class="a" style="left:1076px;top:47px;font-size:13px;color:#666">×</div>
  <div class="a w" style="left:183px;top:80px;width:911px;height:48px"></div>
  <div class="lb" style="left:214px;top:97px"><span style="color:#e33">*</span>报价日期</div>
  <div class="inp" style="left:270px;top:88px;width:154px;height:26px">▦ &nbsp;2024-12-06</div>
  <div class="lb" style="left:461px;top:97px">备注</div>
  <div class="inp" style="left:492px;top:88px;width:590px;height:26px"></div>
  <div class="a w" style="left:183px;top:136px;width:911px;height:362px"></div>
  <div class="a g" style="left:220px;top:151px">物料</div>
  <div class="a" style="left:194px;top:169px;width:67px;height:2px;background:#17a192"></div>
  <div class="a" style="left:280px;top:151px;color:#444">供应商</div>
  <div class="a" style="left:194px;top:171px;width:888px;height:1px;background:#eee"></div>
  <div class="btn bt" style="left:194px;top:185px;width:49px;height:22px">选择物料</div>
  <div class="lb" style="left:251px;top:191px">批量开始日期</div>
  <div class="inp ph" style="left:318px;top:182px;width:99px;height:26px">▦ &nbsp;批量开始日期</div>
  <div class="lb" style="left:424px;top:191px">批量结束日期</div>
  <div class="inp ph" style="left:492px;top:182px;width:97px;height:26px">▦ &nbsp;批量结束日期</div>
  <div class="lb" style="left:597px;top:191px">永久生效</div>
  <div class="a" style="left:644px;top:188px;width:28px;height:15px;border-radius:8px;background:#ccc"><div class="a" style="left:1px;top:1px;width:13px;height:13px;border-radius:50%;background:#fff"></div></div>
  <div class="lb" style="left:681px;top:191px">批量修改税率</div>
  <div class="inp ph" style="left:750px;top:182px;width:68px;height:26px">请选择 <span style="margin-left:auto;margin-right:6px">▾</span></div>
  <div class="lb" style="left:826px;top:191px">批量允许浮动</div>
  <div class="inp" style="left:893px;top:182px;width:70px;height:26px">不允许浮动 ▾</div>
  <div class="a bl" style="left:1029px;top:191px">导入 | 清空</div>
  <table class="t" style="left:197px;top:216px;width:881px">
   <colgroup><col style="width:48px"><col style="width:48px"><col style="width:58px"><col style="width:57px"><col style="width:55px"><col style="width:57px"><col style="width:57px"><col style="width:57px"><col style="width:58px"><col style="width:55px"><col style="width:73px"><col style="width:73px"><col style="width:75px"><col style="width:70px"><col style="width:40px"></colgroup>
   <tr class="h" style="height:29px"><td>序号</td><td>操作</td><td>物料编码</td><td>物料名称</td><td>规格</td><td>上期价格</td><td style="color:#e33">采购单价</td><td>采购单位</td><td>标准单价</td><td>标准单位</td><td>允许浮动</td><td>浮动下限</td><td>下限单价</td><td>浮动上限</td><td>上限单价</td></tr>
   <tr style="height:29px"><td style="text-align:center">1</td><td>+ -</td><td class="o">Z0002</td><td>清远乌鸡</td><td></td><td>0.00</td><td class="o" style="text-align:right">10.0000</td><td>斤</td><td class="o" style="text-align:right">10.0000</td><td>斤</td><td><span class="o" style="padding:8px 2px">不允许浮动</span> ▾</td><td style="text-align:center">0</td><td>0</td><td style="text-align:right">0</td><td>0</td></tr>
  </table>
  <div class="a" style="left:197px;top:274px;width:485px;height:4px;background:#ddd"></div>
  <div class="pg" style="left:210px;top:286px">〈 <b>1</b> 〉 <span style="border:1px solid #eee;padding:3px 4px;color:#666">20 条/页 ▾</span></div>
  <div class="red" style="left:574px;top:206px;width:120px;height:91px"></div>
  <div class="a" style="left:207px;top:474px;color:#777">创建人: 系统管理员</div>
  <div class="a" style="left:342px;top:474px;color:#777">创建时间: 2024-12-06 11:08:35</div>
  <div class="a" style="left:503px;top:474px;color:#777">审核人:</div>
  <div class="a" style="left:637px;top:474px;color:#777">审核时间:</div>
  <div class="a w" style="left:177px;top:502px;width:920px;height:39px"></div>
  <div class="btn bt" style="left:978px;top:508px;width:47px;height:27px">保存</div>
  <div class="btn bw" style="left:1032px;top:508px;width:46px;height:27px">关闭</div>
</div>

</body></html>
